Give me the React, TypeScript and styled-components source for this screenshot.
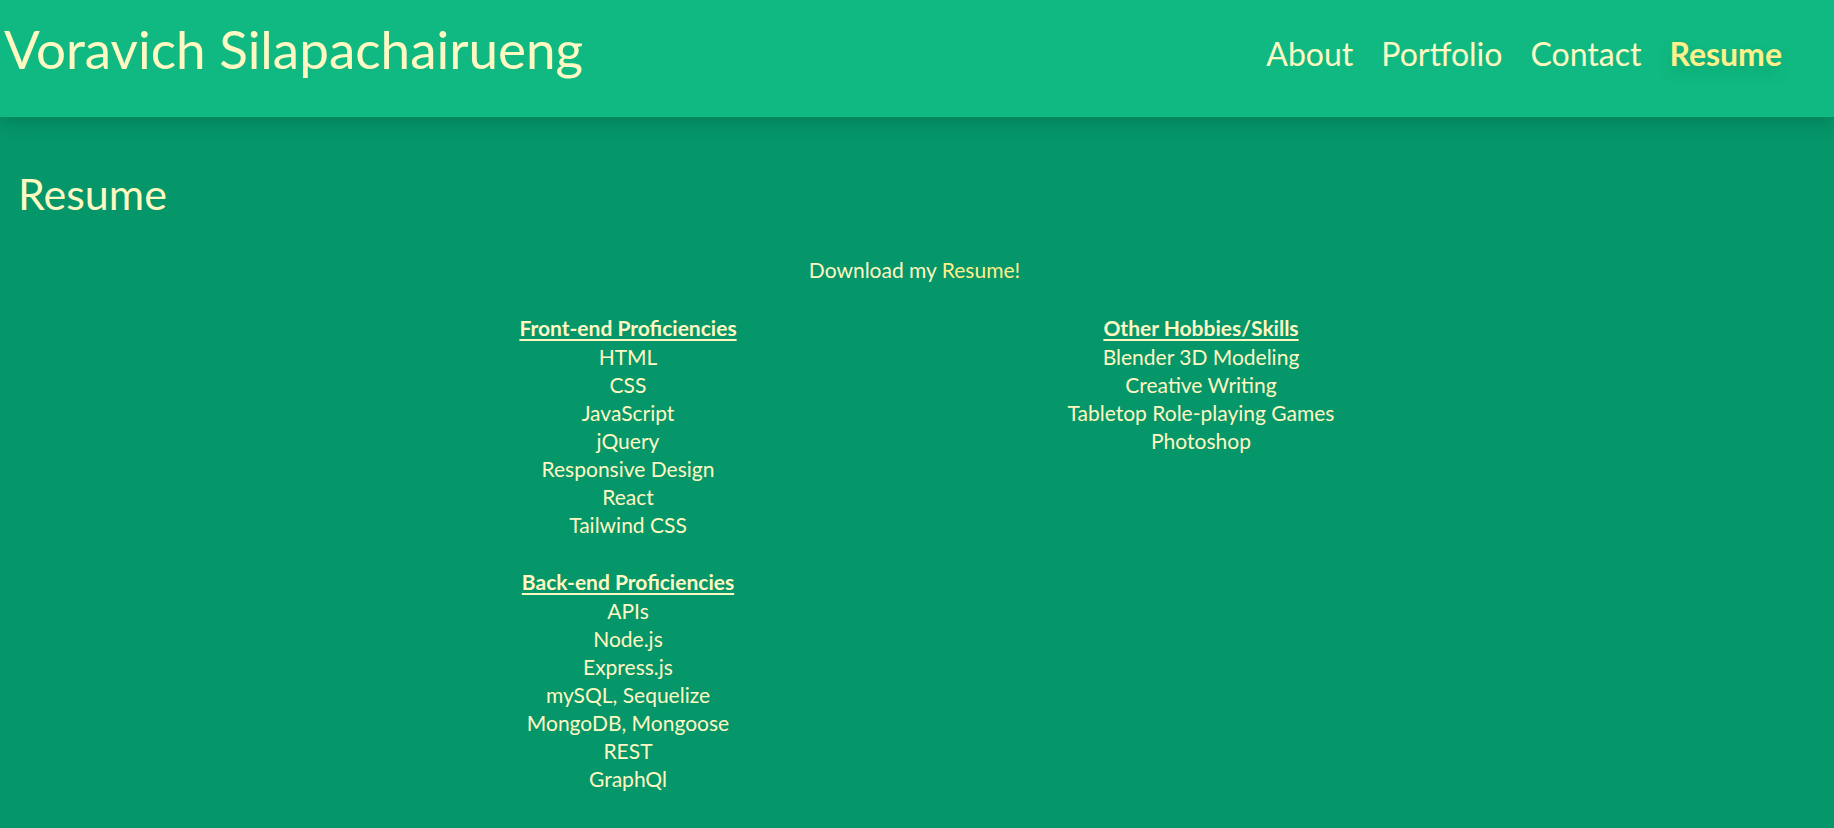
import React from "react";
import styled, { createGlobalStyle } from "styled-components";

const GlobalStyle = createGlobalStyle`
  html, body {
    margin: 0;
    padding: 0;
    background: #059669;
  }
  body {
    font-family: Lato, "Open Sans", sans-serif;
    color: #fef9c3;
  }
  * { box-sizing: border-box; }
`;

const Header = styled.header`
  position: relative;
  z-index: 1;
  display: flex;
  justify-content: space-between;
  align-items: flex-start;
  height: 117px;
  background: #10b981;
  box-shadow: 0 5px 18px rgba(0, 0, 0, 0.16);
`;

const Title = styled.h1`
  margin: 17px 0 0 4px;
  font-size: 53px;
  font-weight: 400;
  line-height: normal;
  color: #fef9c3;
`;

const Nav = styled.nav`
  display: flex;
  gap: 28px;
  margin-top: 34px;
  padding-right: 52px;
`;

const NavLink = styled.a<{ $active?: boolean }>`
  font-size: 32px;
  line-height: normal;
  font-weight: ${(p) => (p.$active ? 700 : 400)};
  color: ${(p) => (p.$active ? "#fef08a" : "#fef9c3")};
  text-decoration: none;
  text-shadow: ${(p) => (p.$active ? "0 8px 18px rgba(0,0,0,0.12)" : "none")};
  cursor: pointer;
`;

const Main = styled.main`
  padding: 51px 23px 40px 18px;
`;

const PageTitle = styled.h2`
  margin: 0 0 37px 0;
  font-size: 43px;
  font-weight: 400;
  line-height: normal;
`;

const Download = styled.p`
  margin: 0 0 30px 0;
  text-align: center;
  font-size: 21px;
  line-height: 28px;
`;

const ResumeLink = styled.a`
  color: #fef08a;
  text-decoration: none;
`;

const Columns = styled.div`
  display: grid;
  grid-template-columns: 1fr 1fr;
  width: 1146px;
  margin: 0 auto;
`;

const Column = styled.div`
  display: flex;
  flex-direction: column;
  align-items: center;
`;

const Group = styled.section`
  display: flex;
  flex-direction: column;
  align-items: center;
  & + & {
    margin-top: 29px;
  }
`;

const GroupTitle = styled.h3`
  margin: 0 0 1px 0;
  font-size: 21px;
  line-height: 28px;
  font-weight: 700;
  text-decoration: underline;
  text-underline-offset: 3px;
`;

const Item = styled.div`
  font-size: 21px;
  line-height: 28px;
`;

const groups: { col: number; title: string; items: string[] }[] = [
  {
    col: 0,
    title: "Front-end Proficiencies",
    items: ["HTML", "CSS", "JavaScript", "jQuery", "Responsive Design", "React", "Tailwind CSS"],
  },
  {
    col: 0,
    title: "Back-end Proficiencies",
    items: ["APIs", "Node.js", "Express.js", "mySQL, Sequelize", "MongoDB, Mongoose", "REST", "GraphQl"],
  },
  {
    col: 1,
    title: "Other Hobbies/Skills",
    items: ["Blender 3D Modeling", "Creative Writing", "Tabletop Role-playing Games", "Photoshop"],
  },
];

export default function App() {
  return (
    <>
      <GlobalStyle />
      <Header>
        <Title>Voravich Silapachairueng</Title>
        <Nav>
          <NavLink>About</NavLink>
          <NavLink>Portfolio</NavLink>
          <NavLink>Contact</NavLink>
          <NavLink $active>Resume</NavLink>
        </Nav>
      </Header>
      <Main>
        <PageTitle>Resume</PageTitle>
        <Download>
          Download my <ResumeLink>Resume!</ResumeLink>
        </Download>
        <Columns>
          {[0, 1].map((c) => (
            <Column key={c}>
              {groups
                .filter((g) => g.col === c)
                .map((g) => (
                  <Group key={g.title}>
                    <GroupTitle>{g.title}</GroupTitle>
                    {g.items.map((it) => (
                      <Item key={it}>{it}</Item>
                    ))}
                  </Group>
                ))}
            </Column>
          ))}
        </Columns>
      </Main>
    </>
  );
}
